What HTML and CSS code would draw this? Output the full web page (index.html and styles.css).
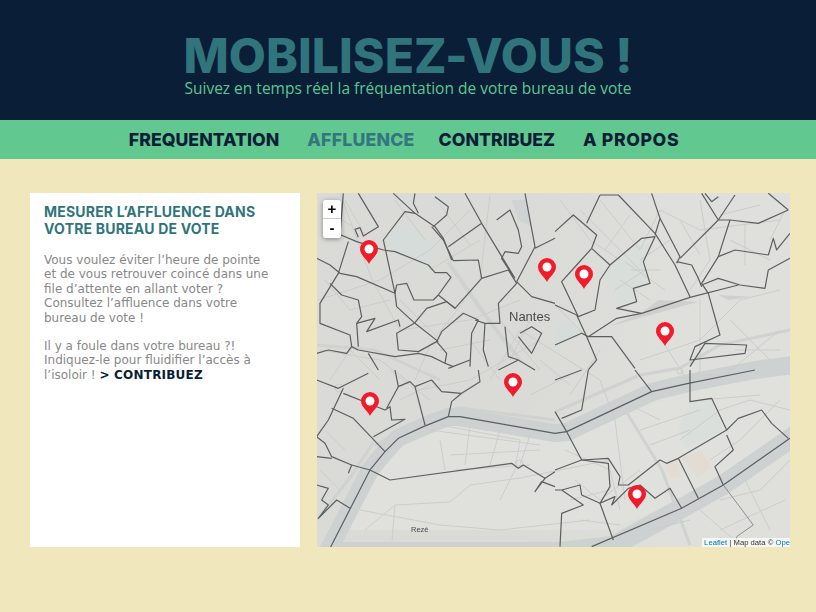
FILE: index.html
```html
<!DOCTYPE html>
<html>
    <head>
        <meta charset="UTF-8" />
        <meta name="viewport" content="width=device-width" />
        <title>Mobilisez-vous !</title>
        <link rel="stylesheet" href="styles.css">
    </head>
    <body>
        <header class="banner">
            <h1 class="title">MOBILISEZ-VOUS !</h1>
            <p class="subtitle">Suivez en temps réel la fréquentation de votre bureau de vote</p>
        </header>
        <nav class="menu">
            <a href="#">FREQUENTATION</a>
            <a href="#" class="active">AFFLUENCE</a>
            <a href="#">CONTRIBUEZ</a>
            <a href="#" class="about">A PROPOS</a>
        </nav>
        <main class="content">
            <section class="panel">
                <h2>MESURER L’AFFLUENCE DANS VOTRE BUREAU DE VOTE</h2>
                <p>Vous voulez éviter l’heure de pointe<br>et de vous retrouver coincé dans une<br>file d’attente en allant voter ?<br>Consultez l’affluence dans votre<br>bureau de vote !</p>
                <p>Il y a foule dans votre bureau ?!<br>Indiquez-le pour fluidifier l’accès à<br>l’isoloir ! <a href="#">&gt; CONTRIBUEZ</a></p>
            </section>
            <section class="map">
                <svg class="tiles" viewBox="317 193 473 354" width="473" height="354">
                    <defs>
                        <g id="pin">
                            <path d="M0 0 C-2 -5 -9 -9 -9 -15 A9 9 0 0 1 9 -15 C9 -9 2 -5 0 0 Z" fill="#f01c2b"/>
                            <circle cx="0" cy="-15" r="4.5" fill="#fff"/>
                        </g>
                        <filter id="soft"><feGaussianBlur stdDeviation="0.35"/></filter>
                        <linearGradient id="tone">
                            <stop offset="0" stop-color="#dadbd7"/>
                            <stop offset="0.45" stop-color="#dadbd7"/>
                            <stop offset="0.75" stop-color="#dfe0dc"/>
                        </linearGradient>
                    </defs>
                    <rect x="317" y="193" width="473" height="354" fill="url(#tone)"/>

                    <g filter="url(#soft)">
                    <!-- parks, blocks -->
                    <path d="M385 452 L448 425 L555 440 L600 420 L700 390 L790 375 V430 L700 490 L610 530 H345 Z" fill="#e0e1dd"/>
                    <g transform="translate(315 190) scale(.3333)" fill="#d6dcd9">
                        <path d="M215 150 L270 95 L360 165 L345 225 L240 185 Z"/>
                        <path d="M590 30 L635 30 L650 110 L610 90 Z" fill="#d0d3d3"/>
                    </g>
                    <g transform="translate(555 190) scale(.3333)">
                        <path d="M135 250 L240 165 L300 160 L265 215 L285 280 L235 295 L245 335 L185 340 Z" fill="#d9dedb"/>
                        <path d="M0 400 L40 390 L80 430 L0 465 Z" fill="#d5dcd9"/>
                        <path d="M160 410 L430 335 L310 330 L260 368 Z" fill="#cfd0ce"/>
                        <path d="M490 315 L590 320 L520 330 Z" fill="#cfd0ce"/>
                    </g>
                    <g transform="translate(555 370) scale(.3333)">
                        <path d="M405 95 L470 85 L505 180 L390 235 L370 170 Z" fill="#dadfdc"/>
                        <path d="M330 285 L368 270 L378 320 L345 322 Z" fill="#e2dcd2"/>
                        <path d="M380 265 L440 240 L470 290 L428 322 Z" fill="#e2dcd2"/>
                    </g>

                    <!-- pale roads beside the river -->
                    <g fill="none" stroke="#d0d2d0" stroke-width="3" stroke-linejoin="round">
                        <path d="M375 445 L430 415 L460 408 L555 420"/>
                        <path d="M555 412 L640 375 L680 368 L720 345 L790 330"/>
                        <path d="M317 520 L352 475 L375 440"/>
                        <path d="M627 413 L662 470 L690 545"/>
                        <path d="M317 345 L375 350 L440 380"/>
                        <path d="M448 262 L490 322 L520 360" stroke-width="4"/>
                    </g>

                    <!-- river -->
                    <g fill="none" stroke="#cdd1d1" stroke-linejoin="round">
                        <path stroke-width="18" d="M326 555 L370 470 L385 452 L398 438 L423 427 L448 417 L460 417 L555 433 L567 432 L652 392 L688 383 L755 370 L800 364"/>
                        <path stroke-width="20" d="M340 552 H560 L613 546 L682 508 L723 485 L800 432"/>
                    </g>

                    <!-- minor streets -->
                    <g fill="none" stroke="#cbcdca" stroke-width="1">
                        <path d="M340 193 L372 280 L400 330 L470 320 L520 300"/>
                        <path d="M318 300 L380 280 L430 250 L470 210"/>
                        <path d="M490 195 L480 280 L430 345 L415 380"/>
                        <path d="M320 350 L380 360 L420 390 L470 380 L540 340"/>
                        <path d="M520 330 L600 380 L615 420 L625 500"/>
                        <path d="M600 200 L640 250 L660 210 L700 230 L780 220"/>
                        <path d="M640 360 L700 340 L740 300 L780 290"/>
                        <path d="M690 375 L725 375 L780 330"/>
                        <path d="M665 345 L690 385 L700 370 L700 300"/>
                        <path d="M365 490 L395 440 M365 530 L395 505 L450 502 L470 485 L520 478 L610 460"/>
                        <path d="M395 505 L392 540 M360 510 L440 525 L500 530 L590 520"/>
                        <path d="M680 440 L720 410 L750 400 L790 410"/>
                        <path d="M710 460 L740 440 L780 400"/>
                        <path d="M720 500 L760 490 L790 460"/>
                        <path d="M440 425 L520 440 L515 470 L500 500"/>
                        <path d="M470 425 L465 465 M500 430 L490 465 M530 435 L520 465 M440 440 L445 470"/>
                        <path d="M450 455 L540 450 M455 470 L530 465 M430 430 L540 445"/>
                        <path d="M560 200 L590 240 L620 260 M580 210 L640 270"/>
                        <path d="M700 200 L710 260 L690 290 M730 240 L770 260"/>
                        <path d="M640 260 L670 240 M630 270 L660 270 M620 280 L650 300 M625 262 L665 290 M615 290 L645 270"/>
                        <path d="M565 450 L610 470 L620 510 M600 500 L640 470 M640 430 L700 410 M650 445 L690 430"/>
                        <path d="M325 210 L350 225 M345 200 L365 235 M395 200 L425 240 M440 205 L470 245 M430 270 L480 240"/>
                        <path d="M325 280 L350 310 L390 300 M345 345 L380 380 M330 380 L350 350 M400 300 L440 340"/>
                        <path d="M470 340 L500 380 M520 330 L490 380 M500 320 L540 370 M530 320 L510 360 M440 350 L490 340"/>
                        <path d="M540 360 L570 385 M550 300 L590 340 M600 350 L570 395 M530 395 L570 375"/>
                        <path d="M605 250 L630 215 M680 220 L700 255 M720 215 L760 205 M745 225 L745 265 M770 240 L785 210"/>
                        <path d="M730 320 L770 360 M735 350 L780 350 M700 400 L760 395 M620 400 L660 420"/>
                        <path d="M700 510 L740 545 M745 480 L770 530 M650 530 L690 520 M720 530 L785 500"/>
                        <path d="M575 480 L600 500 M570 500 L610 490 M580 520 L620 525"/>
                        <path d="M325 430 L345 450 M320 470 L340 490 M400 400 L430 385 M390 370 L430 400"/>
                        <circle cx="339" cy="388" r="4"/>
                        <circle cx="519" cy="464" r="4"/>
                        <circle cx="680" cy="371" r="3"/>
                    </g>

                    <!-- boundaries: top left -->
                    <g transform="translate(315 190) scale(.3333)" fill="none" stroke="#5c5f5f" stroke-width="3.6" stroke-linejoin="round">
                        <path d="M130 10 L190 110 L145 138 L135 113 L120 118 L130 142"/>
                        <path d="M85 10 L75 135 M100 155 L70 250 L15 340 L15 400 L105 435 L110 470"/>
                        <path d="M5 205 L45 225 L75 250 L125 260 L240 310 L245 350 L300 400 L370 455"/>
                        <path d="M78 135 L125 155 L205 180 L240 185 L340 225 L360 248 L395 248 L408 262 L370 315 L420 355 L500 265 L490 210 L415 212 L385 150 L350 110"/>
                        <path d="M235 10 L300 70 L360 110 L385 145 L410 210"/>
                        <path d="M300 70 L270 65 L205 150 L240 310"/>
                        <path d="M360 20 L400 50 L395 75 L355 110 M300 10 L295 40 L310 70"/>
                        <path d="M450 10 L500 100 L600 265 M500 100 L400 170"/>
                        <path d="M500 265 L580 240 L605 280 L550 340 L555 400 L510 400 L480 390"/>
                        <path d="M545 90 L585 60 L610 120 L620 170 L610 190 L570 185 L560 205 L595 260"/>
                        <path d="M630 10 L660 170 L605 275 M660 175 L720 145"/>
                        <path d="M605 275 L650 320 L720 340"/>
                        <path d="M240 310 L245 285 L275 280 L297 330 L355 330 L370 315"/>
                        <path d="M420 355 L395 335 L335 355 L298 400 L245 430 L250 480 L310 485 L365 455 L380 425 L445 370 L490 390 L470 430 L465 530"/>
                        <path d="M125 400 L180 385 L155 425 L250 390 L255 410 M125 400 L130 470"/>
                        <path d="M45 280 L80 315 L130 330 L140 380 L125 400"/>
                        <path d="M5 490 L40 480 L95 490 L110 470 L130 480 L240 500 L310 490 L350 500 L390 520 L415 530"/>
                        <path d="M510 400 L505 480 L520 530 M365 455 L395 490 L390 520"/>
                        <path d="M610 510 L550 540 M570 410 L580 500 L610 510 L660 540 M615 430 L650 410 L680 430 L650 490 L610 440"/>
                        <path d="M160 490 L190 540 M465 510 L400 535"/>
                    </g>
                    <!-- boundaries: top right -->
                    <g transform="translate(555 190) scale(.3333)" fill="none" stroke="#5c5f5f" stroke-width="3.6" stroke-linejoin="round">
                        <path d="M0 125 L55 75 L125 135 L110 175 L65 225 L20 275 L70 380 L120 360 L135 270 L165 225 L110 175"/>
                        <path d="M135 15 L95 100 M135 15 L190 15 L300 130 L360 225 L405 320"/>
                        <path d="M165 225 L260 145 L300 140 L265 215 L285 280 L235 295 L245 335 L185 355 L260 370"/>
                        <path d="M290 10 L315 85 L375 200 L365 220 M315 85 L300 135"/>
                        <path d="M375 205 L490 90 L540 15 M440 10 L490 90 M490 90 L525 90 L610 100 L700 60 M640 10 L700 60"/>
                        <path d="M525 90 L490 200 L440 280 L460 310 L495 435 L420 470 L405 510 L570 490 L575 465 L450 460 L405 530"/>
                        <path d="M365 215 L410 225 L430 265 L440 290"/>
                        <path d="M490 200 L540 180 L640 195 L655 145 L665 180 L705 130"/>
                        <path d="M440 285 L490 265 L555 285 L630 295 L640 240 L705 205"/>
                        <path d="M100 440 L185 385 L260 370 L405 322 L550 285"/>
                        <path d="M0 345 L65 375 L95 440 L125 510 L100 540"/>
                        <path d="M0 465 L80 430 L100 440 L170 440 L240 535"/>
                        <path d="M450 10 L470 35 L490 20"/>
                    </g>
                    <!-- boundaries: bottom left -->
                    <g transform="translate(315 370) scale(.3333)" fill="none" stroke="#5c5f5f" stroke-width="3.6" stroke-linejoin="round">
                        <path d="M5 30 L70 55 L160 10 M85 55 L40 150 L5 200 L30 220 L50 260 L110 285 L100 310"/>
                        <path d="M85 70 L210 120 L225 110 L230 150 L270 148 L175 200 M50 115 L115 145 L210 245"/>
                        <path d="M240 0 L250 50 L285 35 L300 50 L330 165 M300 50 L350 30 L380 65 L440 70 L495 35 L490 0 M440 70 L410 95 L400 140"/>
                        <path d="M250 50 L215 115 M5 260 L50 265"/>
                        <path d="M400 140 L325 170 L250 205 L210 245 L165 300 L45 535"/>
                        <path d="M400 140 L435 140 L720 190"/>
                        <path d="M110 285 L165 300 L225 330 L590 280 L610 295 L625 285 L690 325 L660 365 L680 335 L720 350"/>
                        <path d="M5 345 L40 355 L20 390 L40 405 L10 445 L65 390 L105 415 M690 325 L720 305"/>
                    </g>
                    <!-- boundaries: bottom right -->
                    <g transform="translate(555 370) scale(.3333)" fill="none" stroke="#5c5f5f" stroke-width="3.6" stroke-linejoin="round">
                        <path d="M0 30 L80 0 M100 0 L80 120 L20 145 M0 125 L35 185 L80 270 L160 280 L165 350 L135 400 L180 380 L170 405 L220 355 L255 345 L300 385 L345 355 L380 415"/>
                        <path d="M80 270 L0 300 M240 0 L290 65 M0 190 L35 185 L290 65 L400 40 L600 0"/>
                        <path d="M405 0 L405 95 L470 85 L515 180 L550 145 L620 120 L650 160 L700 205"/>
                        <path d="M515 180 L370 265 L335 280 L315 270 L220 345 L190 345 L195 320 L160 265 L80 270"/>
                        <path d="M370 265 L430 385 M515 195 L535 240 L480 290 L505 345"/>
                        <path d="M135 400 L80 375 L75 345 L20 360 L85 405 L20 430 L15 530 M0 360 L20 360 M135 400 L175 510"/>
                        <path d="M110 530 L380 415 L505 345 L705 205"/>
                        <path d="M505 345 L595 465 L545 500 L545 530" stroke="#7b7e7e" stroke-width="2.5"/>
                    </g>
                    </g>

                    <text class="place" x="509" y="321">Nantes</text>
                    <text class="place small" x="411" y="532">Rezé</text>

                    <use href="#pin" x="369" y="264"/>
                    <use href="#pin" x="547" y="282"/>
                    <use href="#pin" x="584" y="289"/>
                    <use href="#pin" x="665" y="346"/>
                    <use href="#pin" x="513" y="397"/>
                    <use href="#pin" x="370" y="416"/>
                    <use href="#pin" x="637" y="509"/>
                </svg>
                <div class="zoom">
                    <a href="#">+</a>
                    <a href="#">-</a>
                </div>
                <div class="credit"><a href="#">Leaflet</a> | Map data © <a href="#">Ope</a></div>
            </section>
        </main>
    </body>
</html>
```

FILE: styles.css
```css
body {
    margin: 0;
    height: 612px;
    overflow: hidden;
    background-color: #f0e7bd;
    font-family: "Liberation Sans", sans-serif;
}

.banner {
    height: 120px;
    box-sizing: border-box;
    padding-top: 34px;
    background-color: #0a1e38;
    text-align: center;
}

.title {
    margin: 0;
    font-family: Inter, sans-serif;
    font-size: 48px;
    font-weight: 800;
    line-height: 44px;
    letter-spacing: 0.1px;
    color: #31757c;
}

.subtitle {
    margin: 0;
    font-family: "Open Sans", sans-serif;
    font-size: 15.5px;
    line-height: 20px;
    color: #5dc690;
}

.menu {
    height: 39px;
    display: flex;
    justify-content: center;
    align-items: center;
    gap: 28px;
    padding-right: 8px;
    background-color: #61c88f;
}

.menu a {
    font-family: Inter, sans-serif;
    font-size: 17.7px;
    font-weight: 800;
    color: #0a1e38;
    text-decoration: none;
}

.menu a.active {
    margin-right: -4px;
    letter-spacing: 0.2px;
    color: #34767f;
}

.menu a.about {
    letter-spacing: 0.6px;
}

.content {
    display: flex;
    gap: 17px;
    padding: 34px 26px 0 30px;
}

.panel {
    width: 270px;
    height: 354px;
    box-sizing: border-box;
    padding: 10px 14px;
    background-color: #fff;
}

.panel h2 {
    margin: 0 0 16px 0;
    font-family: Inter, sans-serif;
    font-size: 14px;
    font-weight: 700;
    line-height: 17px;
    letter-spacing: 0.2px;
    color: #2f757c;
}

.panel p {
    margin: 0 0 14px 0;
    font-family: "DejaVu Sans", sans-serif;
    font-size: 12px;
    line-height: 14.4px;
    color: #888;
}

.panel p a {
    font-weight: bold;
    letter-spacing: 0.2px;
    color: #0a1e38;
    text-decoration: none;
}

.map {
    position: relative;
    width: 473px;
    height: 354px;
    overflow: hidden;
}

.tiles {
    display: block;
}

.place {
    font-family: "Liberation Sans", sans-serif;
    font-size: 13px;
    fill: #4a4a4a;
}

.place.small {
    font-size: 7.5px;
}

.zoom {
    position: absolute;
    top: 7px;
    left: 6px;
    width: 18px;
    border-radius: 3px;
    box-shadow: 0 1px 5px rgba(0, 0, 0, 0.4);
}

.zoom a {
    display: block;
    height: 19px;
    box-sizing: border-box;
    border-bottom: 1px solid #ccc;
    border-radius: 3px 3px 0 0;
    background-color: #fff;
    font-family: "Liberation Sans", sans-serif;
    font-size: 15px;
    font-weight: bold;
    line-height: 18px;
    text-align: center;
    color: #000;
    text-decoration: none;
}

.zoom a:last-child {
    border-bottom: none;
    border-radius: 0 0 3px 3px;
}

.credit {
    position: absolute;
    right: 0;
    bottom: 0;
    padding: 0 0 0 2px;
    background-color: rgba(255, 255, 255, 0.7);
    font-size: 7.7px;
    line-height: 9px;
    white-space: nowrap;
    color: #333;
}

.credit a {
    color: #0078a8;
    text-decoration: none;
}
```
